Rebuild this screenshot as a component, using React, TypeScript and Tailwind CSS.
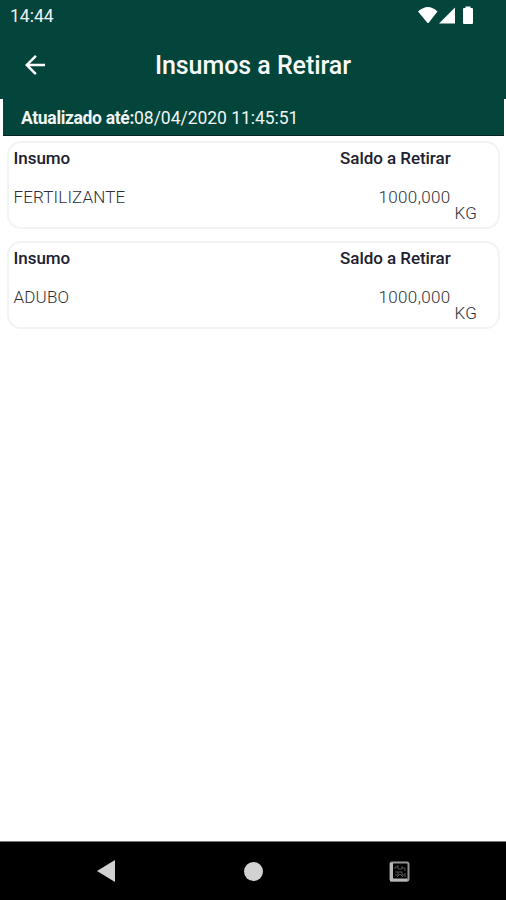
type Item = { name: string; balance: string; unit: string };

const items: Item[] = [
  { name: "FERTILIZANTE", balance: "1000,000", unit: "KG" },
  { name: "ADUBO", balance: "1000,000", unit: "KG" },
];

function StatusBar() {
  return (
    <div className="flex h-8 items-center justify-between pl-[10px] pr-8 text-[#eef3f2]">
      <span className="text-[17.5px] leading-[33px]">14:44</span>
      <svg width="56" height="20" viewBox="0 0 56 20" fill="#fff" className="shrink-0">
        <path d="M0 5.500Q10-3.500 19.500 5.500L10.500 17h-1Z" />
        <path d="M21 17.500 37 1.500v16Z" />
        <path d="M47.500 .5h5v1.500H54q1 0 1 1v14q0 1-1 1h-8q-1 0-1-1V3q0-1 1-1h1.500Z" />
      </svg>
    </div>
  );
}

function Header() {
  return (
    <header className="h-[99px] bg-[#03443b]">
      <StatusBar />
      <div className="grid h-[67px] grid-cols-[70px_1fr_70px] items-start">
        <button aria-label="Voltar" className="ml-5 mt-[17.5px] w-[30px]">
          <svg width="30" height="30" viewBox="0 0 24 24" fill="#fff">
            <path d="M20 11H7.830l5.590-5.590L12 4l-8 8 8 8 1.410-1.410L7.830 13H20v-2z" />
          </svg>
        </button>
        <h1 className="mt-[18px] whitespace-nowrap text-center text-[25px] font-medium leading-[32px] tracking-[-0.05px] text-[#f8faf9]">
          Insumos a Retirar
        </h1>
      </div>
    </header>
  );
}

function Card({ item }: { item: Item }) {
  return (
    <article className="flex h-[88px] justify-between rounded-[14px] border-2 border-[#f1f3f5] pl-[4.5px] pr-[21px] text-[17px] leading-5">
      <div className="pt-[5px]">
        <h2 className="font-medium tracking-[-0.05px] text-[#20202f]">Insumo</h2>
        <p className="mt-[19px] font-light tracking-[0.15px] text-[#303038]">{item.name}</p>
      </div>
      <div className="flex">
        <div className="pt-[5px] text-right">
          <h2 className="font-medium tracking-[-0.05px] text-[#20202f]">Saldo a Retirar</h2>
          <p className="mt-[19px] font-light tracking-[0.35px] text-[#303038]">{item.balance}</p>
        </div>
        <span className="ml-1 mt-[60px] font-light tracking-[0.15px] text-[#303038]">{item.unit}</span>
      </div>
    </article>
  );
}

function NavigationBar() {
  return (
    <nav className="grid h-[59px] grid-cols-[213px_81px_212px] border-t border-[#777] bg-black">
      <button aria-label="Voltar" className="flex items-start pl-[97px] pt-[18px]">
        <svg width="18" height="22" viewBox="0 0 18 22" fill="#d2d2d2">
          <path d="M0 11 18 0v22Z" />
        </svg>
      </button>
      <button aria-label="Início" className="flex items-start justify-center pt-5">
        <span className="size-[19px] rounded-full bg-[#d2d2d2]" />
      </button>
      <button aria-label="Recentes" className="flex items-start pl-[95px] pt-[19px]">
        <svg width="21" height="21" viewBox="0 0 21 21" fill="none">
          <rect x="1.500" y="1.500" width="18" height="18" rx="1.500" stroke="#969696" strokeWidth="2" />
          <path d="M2.500 2v17h16" stroke="#b8b8b8" strokeWidth="3" />
          <path d="M6 8V6h3M9 4v4h4V5M13 7h3v3M6 11h3v3H6M9 11h4v3h3M8 16l3-3 3 3M16 12v4" stroke="#555" strokeWidth="1" />
        </svg>
      </button>
    </nav>
  );
}

export default function App() {
  return (
    <div className="flex h-[900px] w-[506px] flex-col overflow-hidden bg-white font-['Roboto',sans-serif]">
      <Header />
      <div className="ml-[3px] mr-[2px] h-[37px] border-b border-[#00251e] bg-[#03443b] pl-[18px] text-[17.5px] leading-[39px] text-[#f0f5f4]">
        <b className="tracking-[-0.33px]">Atualizado até:</b>
        <span className="tracking-[-0.03px]">08/04/2020 11:45:51</span>
      </div>
      <main className="flex flex-1 flex-col gap-3 pl-[7px] pr-[6px] pt-[5px]">
        {items.map((item) => (
          <Card key={item.name} item={item} />
        ))}
      </main>
      <NavigationBar />
    </div>
  );
}
